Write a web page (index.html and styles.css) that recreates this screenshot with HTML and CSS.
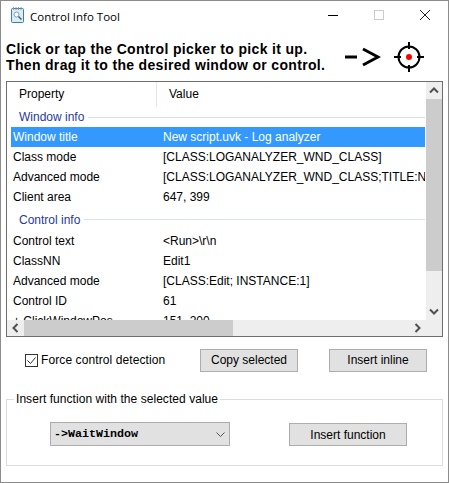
FILE: index.html
```html
<!DOCTYPE html>
<html lang="en">
<head>
    <meta charset="UTF-8">
    <title>Control Info Tool</title>
    <link rel="stylesheet" href="styles.css">
</head>
<body>
    <div class="window">
        <div class="titlebar">
            <svg class="app-icon" width="14" height="16" viewBox="0 0 14 16">
                <rect x="0.5" y="1.5" width="12" height="14" rx="1" fill="#d9ebf4" stroke="#3f7f96"/>
                <path d="M2.5 0v3M5 0v3M7.5 0v3M10 0v3" stroke="#8a9aa2"/>
                <circle cx="5.5" cy="7.5" r="2.5" fill="#f4fafd" stroke="#8ba0aa"/>
                <path d="M7.5 9.5l3 3" stroke="#4d5f6a" stroke-width="1.5"/>
            </svg>
            <span class="title">Control Info Tool</span>
            <div class="caption-btns">
                <svg width="12" height="12" viewBox="0 0 12 12"><path d="M1 6.5h10" stroke="#000"/></svg>
                <svg width="12" height="12" viewBox="0 0 12 12"><rect x="1.5" y="1.5" width="9" height="9" fill="none" stroke="#ccc"/></svg>
                <svg width="12" height="12" viewBox="0 0 12 12"><path d="M1 1l10 10M11 1L1 11" stroke="#222"/></svg>
            </div>
        </div>

        <div class="intro">
            <p class="intro-text">Click or tap the Control picker to pick it up.<br>Then drag it to the desired window or control.</p>
            <svg class="arrow" width="36" height="20" viewBox="0 0 36 20">
                <path d="M0 10h12" stroke="#000" stroke-width="3"/>
                <path d="M18 2l15 8-15 8" fill="none" stroke="#000" stroke-width="3"/>
            </svg>
            <svg class="picker" width="32" height="32" viewBox="0 0 32 32">
                <circle cx="16" cy="16" r="10.5" fill="none" stroke="#000" stroke-width="2"/>
                <path d="M16 1v7M16 24v7M1 16h7M24 16h7" stroke="#000" stroke-width="2"/>
                <circle cx="16" cy="16" r="3" fill="#f00"/>
            </svg>
        </div>

        <div class="list">
            <div class="list-main">
                <div class="list-view">
                    <div class="list-head">
                        <div class="head-cell head-prop">Property</div>
                        <div class="head-cell">Value</div>
                    </div>
                    <div class="group">Window info</div>
                    <div class="row selected"><span>Window title</span><span>New script.uvk - Log analyzer</span></div>
                    <div class="row"><span>Class mode</span><span>[CLASS:LOGANALYZER_WND_CLASS]</span></div>
                    <div class="row"><span>Advanced mode</span><span>[CLASS:LOGANALYZER_WND_CLASS;TITLE:New script.uvk - Log analyzer]</span></div>
                    <div class="row"><span>Client area</span><span>647, 399</span></div>
                    <div class="group group-second">Control info</div>
                    <div class="row"><span>Control text</span><span>&lt;Run&gt;\r\n</span></div>
                    <div class="row"><span>ClassNN</span><span>Edit1</span></div>
                    <div class="row"><span>Advanced mode</span><span>[CLASS:Edit; INSTANCE:1]</span></div>
                    <div class="row"><span>Control ID</span><span>61</span></div>
                    <div class="row"><span>+ ClickWindowPos</span><span>151, 200</span></div>
                </div>
                <div class="vscroll">
                    <svg class="sb-arrow" width="16" height="17" viewBox="0 0 16 17"><path d="M4 10.5l4-4 4 4" fill="none" stroke="#505050" stroke-width="2"/></svg>
                    <div class="vthumb"></div>
                    <svg class="sb-arrow" width="16" height="17" viewBox="0 0 16 17"><path d="M4 6.5l4 4 4-4" fill="none" stroke="#505050" stroke-width="2"/></svg>
                </div>
            </div>
            <div class="hscroll">
                <svg class="sb-arrow" width="17" height="16" viewBox="0 0 17 16"><path d="M10.5 4l-4 4 4 4" fill="none" stroke="#505050" stroke-width="2"/></svg>
                <div class="htrack"><div class="hthumb"></div></div>
                <svg class="sb-arrow" width="17" height="16" viewBox="0 0 17 16"><path d="M6.5 4l4 4-4 4" fill="none" stroke="#505050" stroke-width="2"/></svg>
                <div class="corner"></div>
            </div>
        </div>

        <div class="actions">
            <label class="check">
                <svg width="13" height="13" viewBox="0 0 13 13">
                    <rect x="0.5" y="0.5" width="12" height="12" fill="#fff" stroke="#333"/>
                    <path d="M2.5 6.5l3 3 5-6" fill="none" stroke="#333"/>
                </svg>
                Force control detection
            </label>
            <button class="btn btn-copy">Copy selected</button>
            <button class="btn btn-inline">Insert inline</button>
        </div>

        <fieldset class="groupbox">
            <legend>Insert function with the selected value</legend>
            <div class="combo">
                <span>-&gt;WaitWindow</span>
                <svg width="9" height="5" viewBox="0 0 9 5"><path d="M0.5 0.5l4 4 4-4" fill="none" stroke="#555"/></svg>
            </div>
            <button class="btn btn-func">Insert function</button>
        </fieldset>
    </div>
</body>
</html>
```

FILE: styles.css
```css
html, body {
    margin: 0;
    padding: 0;
}
body {
    font-family: "Liberation Sans", Arial, sans-serif;
    font-size: 12px;
    color: #000;
    background-color: #fff;
}
.window {
    box-sizing: border-box;
    width: 449px;
    height: 483px;
    border: 1px solid #8c8c8c;
    background-color: #fff;
    overflow: hidden;
}
.titlebar {
    display: flex;
    align-items: center;
    height: 30px;
    padding-left: 10px;
}
.app-icon {
    flex: none;
    margin-bottom: 3px;
}
.title {
    margin-left: 5px;
    font-family: "Open Sans", sans-serif;
    font-size: 11.5px;
}
.caption-btns {
    display: flex;
    gap: 34px;
    margin-left: auto;
    margin-right: 17px;
    margin-bottom: 2px;
}
.intro {
    display: flex;
    align-items: center;
    height: 50px;
    padding-left: 5px;
}
.intro-text {
    margin: 2px 0 0;
    width: 339px;
    font-size: 14px;
    line-height: 16px;
    font-weight: bold;
    letter-spacing: 0.33px;
    white-space: nowrap;
}
.arrow {
    flex: none;
    margin-top: 1px;
}
.picker {
    flex: none;
    margin: 2px 0 0 12px;
}
.list {
    box-sizing: border-box;
    width: 437px;
    height: 256px;
    margin-left: 5px;
    border: 1px solid #6e6e6e;
}
.list-main {
    display: flex;
    height: 238px;
}
.list-view {
    flex: 1;
    min-width: 0;
    overflow: hidden;
}
.list-head {
    display: flex;
    height: 25px;
}
.head-cell {
    padding-left: 12px;
    line-height: 24px;
}
.head-prop {
    box-sizing: border-box;
    width: 150px;
    border-right: 1px solid #e5e5e5;
}
.group {
    display: flex;
    align-items: center;
    gap: 4px;
    height: 20px;
    padding-left: 12px;
    padding-right: 1px;
    color: #2a3a9c;
}
.group::after {
    content: "";
    flex: 1;
    height: 1px;
    background-color: #dcdfee;
}
.group-second {
    height: 24px;
    padding-top: 2px;
    padding-bottom: 1px;
    box-sizing: border-box;
}
.row {
    display: flex;
    height: 20px;
    line-height: 20px;
    margin: 0 1px 0 4px;
    white-space: nowrap;
    overflow: hidden;
}
.row span {
    padding-left: 2px;
}
.row span:first-child {
    flex: none;
    width: 148px;
}
.selected {
    background-color: #3399ff;
    color: #fff;
}
.vscroll {
    flex: none;
    display: flex;
    flex-direction: column;
    width: 16px;
    background-color: #eeeeee;
}
.vthumb {
    width: 16px;
    height: 172px;
    background-color: #cccccc;
}
.vscroll .sb-arrow:last-child {
    margin-top: auto;
}
.sb-arrow {
    flex: none;
    display: block;
}
.hscroll {
    display: flex;
    height: 16px;
    background-color: #eeeeee;
}
.htrack {
    flex: 1;
}
.hthumb {
    width: 209px;
    height: 16px;
    background-color: #cccccc;
}
.corner {
    width: 16px;
}
.actions {
    display: flex;
    align-items: center;
    height: 24px;
    margin-top: 11px;
    padding-left: 24px;
}
.check {
    display: flex;
    align-items: center;
    gap: 3px;
    width: 175px;
    letter-spacing: 0.1px;
}
.btn {
    box-sizing: border-box;
    height: 23px;
    padding: 0;
    border: 1px solid #adadad;
    background-color: #e1e1e1;
    color: #000;
    font-family: "Liberation Sans", Arial, sans-serif;
    font-size: 12px;
}
.btn-copy {
    width: 98px;
}
.btn-inline {
    width: 98px;
    margin-left: 31px;
}
.groupbox {
    box-sizing: border-box;
    display: flex;
    width: 437px;
    height: 74px;
    margin: 20px 0 0 5px;
    padding: 0;
    border: 1px solid #dcdcdc;
}
.groupbox legend {
    margin-left: 7px;
    padding: 0 2px;
    font-size: 12px;
    line-height: 14px;
    letter-spacing: 0.05px;
}
.combo {
    box-sizing: border-box;
    display: flex;
    align-items: center;
    justify-content: space-between;
    width: 180px;
    height: 24px;
    margin: 16px 0 0 43px;
    padding: 0 4px 0 3px;
    border: 1px solid #adadad;
    background-color: #e1e1e1;
    font-family: "Liberation Mono", monospace;
    font-size: 11.67px;
    font-weight: bold;
}
.btn-func {
    width: 118px;
    margin: 17px 0 0 59px;
}
```
